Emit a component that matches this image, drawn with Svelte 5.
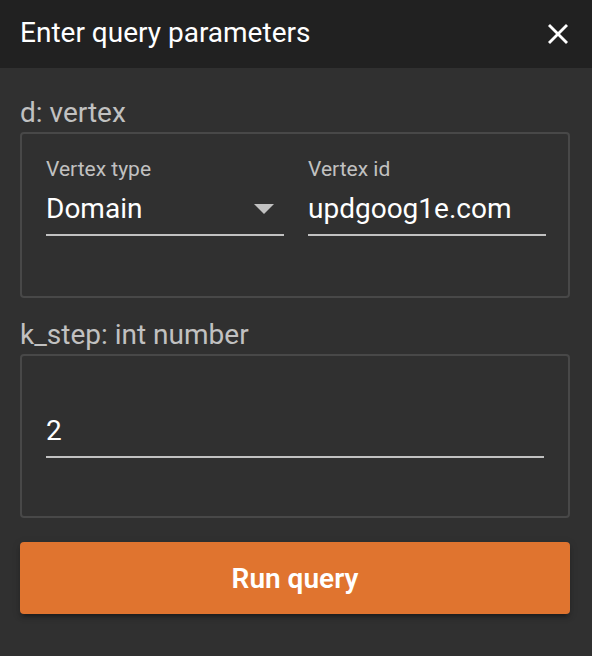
<script>
  let vertexType = $state('Domain');
  let vertexId = $state('updgoog1e.com');
  let steps = $state('2');
</script>

<div class="dialog">
  <header>
    <h1>Enter query parameters</h1>
    <button class="close" type="button" aria-label="Close">
      <svg viewBox="0 0 20 20" width="20" height="20" aria-hidden="true">
        <path d="M0 2 2 0 10 8 18 0 20 2 12 10 20 18 18 20 10 12 2 20 0 18 8 10Z" fill="currentColor" />
      </svg>
    </button>
  </header>

  <form onsubmit={(event) => event.preventDefault()}>
    <h2 id="vertex-title">d: vertex</h2>
    <div class="card pair" role="group" aria-labelledby="vertex-title">
      <div class="field">
        <label for="vertex-type">Vertex type</label>
        <div class="select">
          <select id="vertex-type" bind:value={vertexType}>
            <option>Domain</option>
          </select>
          <svg viewBox="0 0 20 10" width="20" height="10" aria-hidden="true">
            <path d="M0 0H20L10 10Z" fill="currentColor" />
          </svg>
        </div>
      </div>
      <div class="field">
        <label for="vertex-id">Vertex id</label>
        <input id="vertex-id" type="text" spellcheck="false" bind:value={vertexId} />
      </div>
    </div>

    <h2><label for="k-step">k_step: int number</label></h2>
    <div class="card single">
      <input id="k-step" type="text" inputmode="numeric" bind:value={steps} />
    </div>

    <button class="run" type="submit">Run query</button>
  </form>
</div>

<style>
  :global(body) {
    margin: 0;
    background: #303030;
  }

  .dialog,
  input,
  select,
  button {
    font-family: Roboto, "Liberation Sans", sans-serif;
    font-size: 28px;
  }

  .dialog {
    min-height: 100vh;
    color: #fff;
    background: #303030;
  }

  header {
    display: flex;
    align-items: center;
    justify-content: space-between;
    padding: 14px 24px 16px 20px;
    background: #212121;
  }

  h1,
  h2 {
    margin: 0;
    font-size: 28px;
    font-weight: 400;
    line-height: 38px;
  }

  .close {
    display: flex;
    align-self: flex-end;
    margin: 0;
    padding: 8px 0;
    border: 0;
    color: #fff;
    background: none;
    cursor: pointer;
  }

  form {
    padding: 26px 22px 40px 20px;
  }

  h2 {
    color: #c1c1c1;
  }

  .card {
    border: 2px solid #484848;
    border-radius: 4px;
  }

  .pair {
    display: grid;
    grid-template-columns: 1fr 1fr;
    gap: 24px;
    margin-bottom: 18px;
    padding: 20px 22px 60px 24px;
  }

  .single {
    margin-bottom: 24px;
    padding: 56px 24px 58px;
  }

  .field {
    display: flex;
    flex-direction: column;
    gap: 6px;
    min-width: 0;
  }

  .field label {
    color: #c1c1c1;
    font-size: 21px;
    line-height: 30px;
  }

  input,
  select {
    display: block;
    box-sizing: border-box;
    width: 100%;
    height: 46px;
    margin: 0;
    padding: 0 0 8px;
    border: 0;
    border-bottom: 2px solid #c1c1c1;
    border-radius: 0;
    outline: 0;
    appearance: none;
    color: #fff;
    background: transparent;
    line-height: 36px;
  }

  select {
    padding-bottom: 6px;
  }

  .select {
    position: relative;
  }

  .select svg {
    position: absolute;
    top: 14px;
    right: 10px;
    color: #c1c1c1;
    pointer-events: none;
  }

  .run {
    display: block;
    width: 100%;
    margin: 0;
    padding: 18px 16px 16px;
    border: 0;
    border-radius: 4px;
    color: #fff;
    background: #e0742f;
    box-shadow:
      0 6px 2px -4px rgb(0 0 0 / 20%),
      0 4px 4px rgb(0 0 0 / 14%),
      0 2px 10px rgb(0 0 0 / 12%);
    font-weight: 600;
    line-height: 38px;
    cursor: pointer;
  }
</style>
